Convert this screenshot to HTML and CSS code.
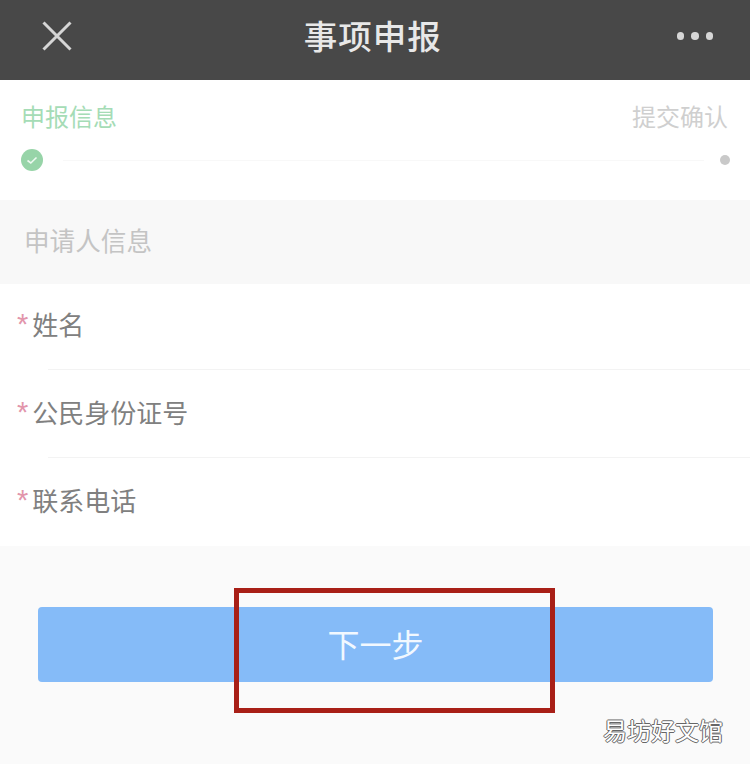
FILE: index.html
```html
<html>
    <head>
        <meta charset="utf-8">
        <link rel="stylesheet" href="styles.css">
    </head>
    <body>
        <div class="top-bar">
            <svg class="close-icon" width="30" height="30" viewBox="0 0 30 30">
                <path d="M1.5 1.5L28.5 28.5M28.5 1.5L1.5 28.5" stroke="#d6d6d6" stroke-width="3" fill="none"/>
            </svg>
            <div class="top-title">事项申报</div>
            <div class="more-dots"><span></span><span></span><span></span></div>
        </div>
        <div class="steps">
            <div class="step-labels">
                <div class="step-done">申报信息</div>
                <div class="step-next">提交确认</div>
            </div>
            <div class="step-track">
                <svg width="22" height="22" viewBox="0 0 22 22">
                    <circle cx="11" cy="11" r="11" fill="#97d4a8"/>
                    <path d="M6.5 11.5L9.8 14L15.5 8.5" stroke="#eef9f1" stroke-width="1.6" fill="none"/>
                </svg>
                <div class="step-line"></div>
                <div class="step-dot"></div>
            </div>
        </div>
        <div class="section-title">申请人信息</div>
        <div class="form-list">
            <div class="form-row"><span class="star">*</span>姓名</div>
            <div class="form-row"><span class="star">*</span>公民身份证号</div>
            <div class="form-row"><span class="star">*</span>联系电话</div>
        </div>
        <div class="bottom">
            <div class="next-btn">下一步</div>
            <div class="red-box"></div>
            <div class="watermark">易坊好文馆</div>
        </div>
    </body>
</html>
```

FILE: styles.css
```css
body {
    font-family: "Liberation Sans", "Noto Sans CJK SC", sans-serif;
    margin: 0;
    background-color: #fafafa;
    height: 764px;
    overflow: hidden;
}
.top-bar {
    height: 80px;
    background-color: #484848;
    display: flex;
    align-items: center;
    justify-content: space-between;
    padding: 0 37px 8px 42px;
    box-sizing: border-box;
}
.top-title {
    font-size: 33.5px;
    font-weight: 500;
    letter-spacing: 1px;
    color: #e8e8e8;
    margin-left: -3px;
    margin-bottom: 3px;
}
.more-dots {
    display: flex;
    gap: 7px;
}
.more-dots span {
    width: 7.5px;
    height: 7.5px;
    border-radius: 50%;
    background-color: #d6d6d6;
}
.steps {
    height: 120px;
    background-color: #fff;
    padding: 22px 22px 0;
    box-sizing: border-box;
}
.step-labels {
    display: flex;
    justify-content: space-between;
    font-size: 24px;
    line-height: 32px;
}
.step-done {
    color: #a5dcb6;
    margin-left: -1px;
}
.step-next {
    color: #cfcfcf;
}
.step-track {
    display: flex;
    align-items: center;
    margin-top: 15px;
    margin-right: -2px;
    margin-left: -1px;
}
.step-line {
    flex: 1;
    height: 1px;
    background-color: #f8f8f8;
    margin: 0 16px 0 20px;
}
.step-dot {
    width: 10px;
    height: 10px;
    border-radius: 50%;
    background-color: #c9c9c9;
}
.section-title {
    height: 84px;
    line-height: 85px;
    padding-left: 24px;
    font-size: 25.6px;
    color: #c4c4c4;
    background-color: #f8f8f8;
}
.form-list {
    background-color: #fff;
}
.form-row {
    height: 88px;
    line-height: 85px;
    font-size: 26px;
    color: #808080;
    padding-left: 17px;
    box-sizing: border-box;
    position: relative;
}
.form-row:last-child {
    height: 86px;
}
.form-row:not(:last-child)::after {
    content: "";
    position: absolute;
    left: 48px;
    right: 0;
    bottom: 2px;
    height: 1px;
    background-color: #f3f3f3;
}
.star {
    color: #e295ab;
    font-size: 29px;
    line-height: 0;
    margin-right: 4px;
    vertical-align: 1px;
}
.bottom {
    position: relative;
    padding: 61px 37px 0 38px;
}
.next-btn {
    height: 75px;
    line-height: 79px;
    background-color: #85bbf8;
    border-radius: 4px;
    text-align: center;
    font-size: 32px;
    color: #f2f8ff;
}
.red-box {
    position: absolute;
    left: 234px;
    top: 42px;
    width: 321px;
    height: 125px;
    border: 5px solid #a81f17;
    box-sizing: border-box;
}
.watermark {
    position: absolute;
    left: 603px;
    top: 170px;
    font-size: 24px;
    line-height: 32px;
    color: #fff;
    text-shadow: -1px 0 #666, 1px 0 #666, 0 -1px #666, 0 1px #666;
    white-space: nowrap;
}
```
